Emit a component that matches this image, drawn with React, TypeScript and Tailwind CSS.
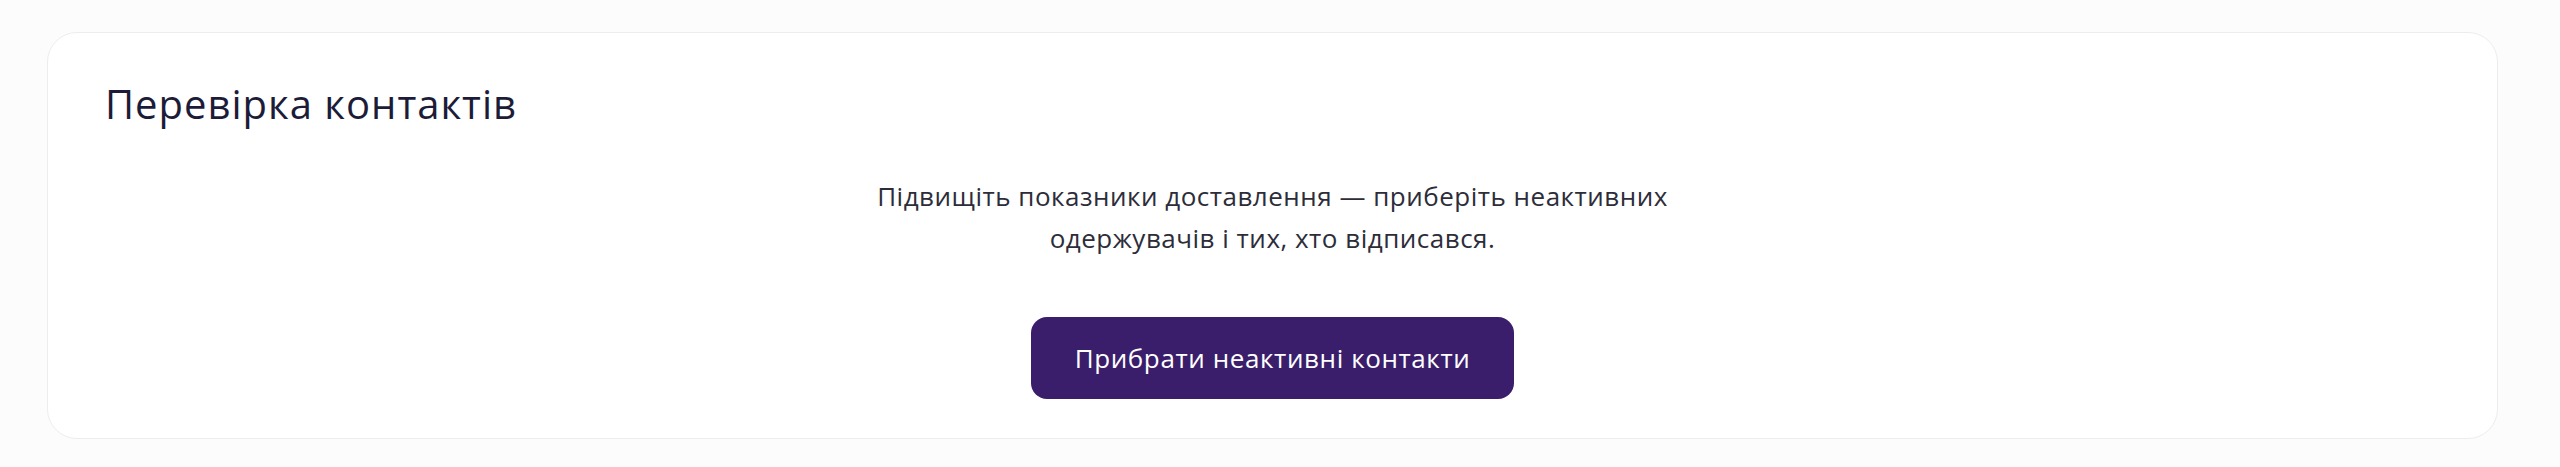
import React from "react";

const font = { fontFamily: '"Open Sans", "Noto Sans", sans-serif' };

export default function App() {
  return (
    <div
      className="min-h-screen bg-[#fcfcfc] pt-[32px] pr-[62px] pl-[47px]"
      style={font}
    >
      <div className="rounded-[30px] border border-[#ededed] bg-white px-[57px] pt-[47px] pb-[39px]">
        <h2 className="text-[40px] leading-[48px] font-normal tracking-[1px] text-[#1c1c38]">
          Перевірка контактів
        </h2>
        <div className="flex flex-col items-center">
          <p className="mt-[47px] text-center text-[26px] leading-[42px] tracking-[0.5px] text-[#2d2d3a]">
            Підвищіть показники доставлення — приберіть неактивних
            <br />
            одержувачів і тих, хто відписався.
          </p>
          <button className="mt-[58px] h-[82px] rounded-[16px] bg-[#3a1e6b] px-[44px] text-[26px] tracking-[0.6px] text-white">
            Прибрати неактивні контакти
          </button>
        </div>
      </div>
    </div>
  );
}
